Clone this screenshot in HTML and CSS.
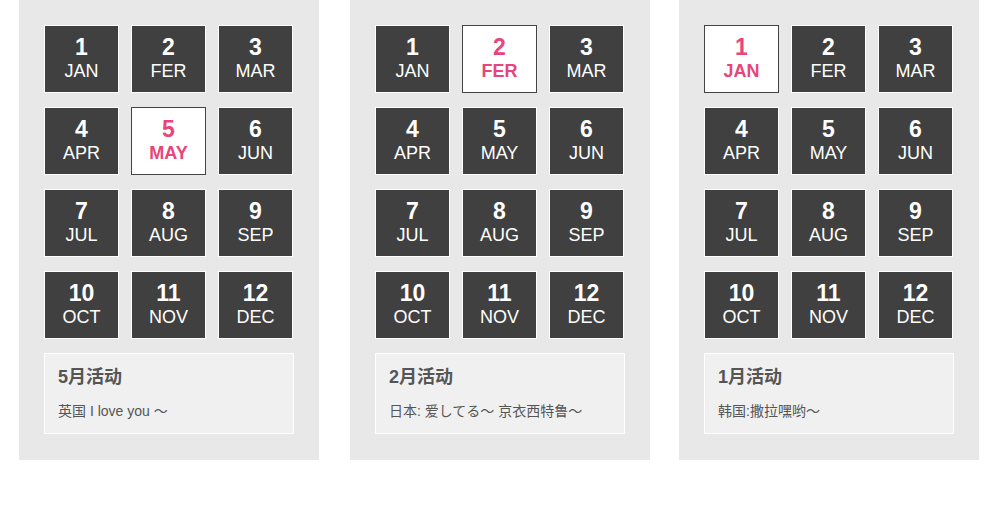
FILE: index.html
```html
<!DOCTYPE html>
<html lang="zh">
<head>
<meta charset="utf-8">
<link rel="stylesheet" href="styles.css">
</head>
<body>
<div class="row">
  <section class="panel">
    <div class="grid">
      <div class="tile"><b>1</b><span>JAN</span></div>
      <div class="tile"><b>2</b><span>FER</span></div>
      <div class="tile"><b>3</b><span>MAR</span></div>
      <div class="tile"><b>4</b><span>APR</span></div>
      <div class="tile active"><b>5</b><span>MAY</span></div>
      <div class="tile"><b>6</b><span>JUN</span></div>
      <div class="tile"><b>7</b><span>JUL</span></div>
      <div class="tile"><b>8</b><span>AUG</span></div>
      <div class="tile"><b>9</b><span>SEP</span></div>
      <div class="tile"><b>10</b><span>OCT</span></div>
      <div class="tile"><b>11</b><span>NOV</span></div>
      <div class="tile"><b>12</b><span>DEC</span></div>
    </div>
    <div class="info">
      <h3>5月活动</h3>
      <p>英国 I love you ～</p>
    </div>
  </section>
  <section class="panel mid">
    <div class="grid">
      <div class="tile"><b>1</b><span>JAN</span></div>
      <div class="tile active"><b>2</b><span>FER</span></div>
      <div class="tile"><b>3</b><span>MAR</span></div>
      <div class="tile"><b>4</b><span>APR</span></div>
      <div class="tile"><b>5</b><span>MAY</span></div>
      <div class="tile"><b>6</b><span>JUN</span></div>
      <div class="tile"><b>7</b><span>JUL</span></div>
      <div class="tile"><b>8</b><span>AUG</span></div>
      <div class="tile"><b>9</b><span>SEP</span></div>
      <div class="tile"><b>10</b><span>OCT</span></div>
      <div class="tile"><b>11</b><span>NOV</span></div>
      <div class="tile"><b>12</b><span>DEC</span></div>
    </div>
    <div class="info">
      <h3>2月活动</h3>
      <p>日本: 爱してる～ 京衣西特鲁～</p>
    </div>
  </section>
  <section class="panel">
    <div class="grid">
      <div class="tile active"><b>1</b><span>JAN</span></div>
      <div class="tile"><b>2</b><span>FER</span></div>
      <div class="tile"><b>3</b><span>MAR</span></div>
      <div class="tile"><b>4</b><span>APR</span></div>
      <div class="tile"><b>5</b><span>MAY</span></div>
      <div class="tile"><b>6</b><span>JUN</span></div>
      <div class="tile"><b>7</b><span>JUL</span></div>
      <div class="tile"><b>8</b><span>AUG</span></div>
      <div class="tile"><b>9</b><span>SEP</span></div>
      <div class="tile"><b>10</b><span>OCT</span></div>
      <div class="tile"><b>11</b><span>NOV</span></div>
      <div class="tile"><b>12</b><span>DEC</span></div>
    </div>
    <div class="info">
      <h3>1月活动</h3>
      <p>韩国:撒拉嘿哟～</p>
    </div>
  </section>
</div>
</body>
</html>
```
FILE: styles.css
```css
* { box-sizing: border-box; }
html, body { margin: 0; padding: 0; background: #fff; }
body {
  font-family: "Liberation Sans", Arial, "Noto Sans CJK SC", sans-serif;
  color: #555;
}
.row {
  display: flex;
  padding-left: 19px;
}
.panel {
  flex: 0 0 300px;
  width: 300px;
  background: #e8e8e8;
  padding: 25px 25px 26px;
}
.panel.mid { margin: 0 29px 0 31px; }
.grid {
  display: grid;
  grid-template-columns: repeat(3, 75px);
  grid-auto-rows: 68px;
  column-gap: 12px;
  row-gap: 14px;
}
.tile {
  background: #404040;
  border: 1px solid #fff;
  color: #fff;
  display: flex;
  flex-direction: column;
  align-items: center;
  padding-top: 8px;
}
.tile b {
  font-size: 23px;
  font-weight: bold;
  line-height: 26px;
}
.tile span {
  font-size: 18px;
  line-height: 22px;
}
.tile.active {
  background: #fff;
  border-color: #444;
  color: #e8457a;
}
.tile.active span { font-weight: bold; }
.info {
  margin-top: 14px;
  background: #f0f0f0;
  border: 1px solid #fff;
  padding: 11px 13px 12px;
  height: 81px;
}
.info h3 {
  margin: 0 0 12px;
  font-size: 18px;
  line-height: 24px;
  font-weight: bold;
  color: #555;
}
.info p {
  margin: 0;
  font-size: 14px;
  line-height: 20px;
  color: #555;
}
```
